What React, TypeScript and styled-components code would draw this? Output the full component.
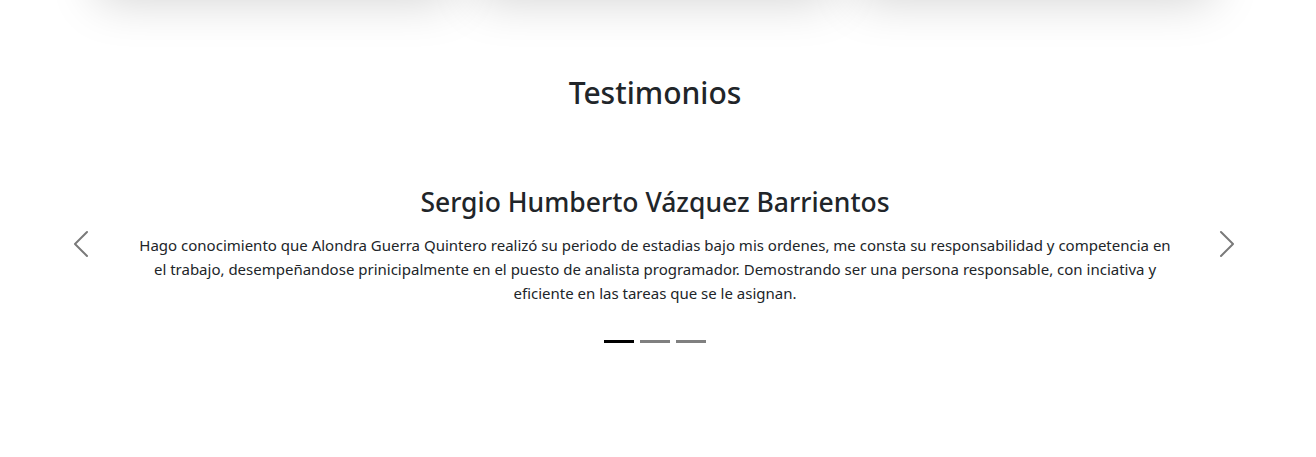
import React from "react";
import styled, { createGlobalStyle } from "styled-components";

const GlobalStyle = createGlobalStyle`
  html, body { margin: 0; padding: 0; background: #fff; }
  body {
    font-family: "Noto Sans", "Open Sans", sans-serif;
    color: #212529;
    overflow: hidden;
  }
`;

const Page = styled.main`
  width: 1310px;
  height: 457px;
  overflow: hidden;
`;

const CardsRow = styled.div`
  margin: -200px auto 0;
  width: 1116px;
  display: grid;
  grid-template-columns: repeat(3, 1fr);
  gap: 24px;
`;

const Card = styled.div`
  height: 185px;
  background: #fff;
  border-radius: 6px;
  box-shadow: 0 1rem 3rem rgba(0, 0, 0, 0.175);
`;

const Section = styled.section`
  padding-top: 90px;
  display: flex;
  flex-direction: column;
  align-items: center;
`;

const Title = styled.h2`
  margin: 0;
  font-size: 30px;
  font-weight: 500;
  line-height: 36px;
  color: #212529;
`;

const Carousel = styled.div`
  position: relative;
  width: 100%;
  margin-top: 75px;
`;

const Slide = styled.div`
  display: flex;
  flex-direction: column;
  align-items: center;
  text-align: center;
`;

const Name = styled.h3`
  margin: 0;
  font-size: 26.5px;
  font-weight: 500;
  line-height: 32px;
  color: #212529;
`;

const Quote = styled.p`
  margin: 15px 0 0;
  max-width: 1044px;
  font-size: 15px;
  line-height: 24px;
  color: #212529;
`;

const Indicators = styled.div`
  display: flex;
  justify-content: center;
  gap: 6px;
  margin-top: 35px;
`;

const Dot = styled.button<{ $active?: boolean }>`
  width: 30px;
  height: 3px;
  padding: 0;
  border: 0;
  background: ${(p) => (p.$active ? "#000" : "#808080")};
  cursor: pointer;
`;

const Control = styled.button<{ $side: "left" | "right" }>`
  position: absolute;
  top: 42px;
  ${(p) => (p.$side === "left" ? "left: 65px;" : "right: 67px;")}
  width: 32px;
  height: 32px;
  padding: 0;
  border: 0;
  background: transparent;
  color: #7a7a7a;
  cursor: pointer;
  display: flex;
  align-items: center;
  justify-content: center;
`;

const Chevron = ({ dir }: { dir: "prev" | "next" }) => (
  <svg width="32" height="32" viewBox="0 0 16 16" fill="currentColor">
    {dir === "prev" ? (
      <path d="M11.354 1.646a.5.5 0 0 1 0 .708L5.707 8l5.647 5.646a.5.5 0 0 1-.708.708l-6-6a.5.5 0 0 1 0-.708l6-6a.5.5 0 0 1 .708 0z" />
    ) : (
      <path d="M4.646 1.646a.5.5 0 0 1 .708 0l6 6a.5.5 0 0 1 0 .708l-6 6a.5.5 0 0 1-.708-.708L10.293 8 4.646 2.354a.5.5 0 0 1 0-.708z" />
    )}
  </svg>
);

export default function App() {
  return (
    <>
      <GlobalStyle />
      <Page>
        <CardsRow>
          <Card />
          <Card />
          <Card />
        </CardsRow>
        <Section>
          <Title>Testimonios</Title>
          <Carousel>
            <Slide>
              <Name>Sergio Humberto Vázquez Barrientos</Name>
              <Quote>
                Hago conocimiento que Alondra Guerra Quintero realizó su periodo de estadias bajo mis ordenes, me consta su
                responsabilidad y competencia en el trabajo, desempeñandose prinicipalmente en el puesto de analista
                programador. Demostrando ser una persona responsable, con inciativa y eficiente en las tareas que se le
                asignan.
              </Quote>
              <Indicators>
                <Dot $active aria-label="Slide 1" />
                <Dot aria-label="Slide 2" />
                <Dot aria-label="Slide 3" />
              </Indicators>
            </Slide>
            <Control $side="left" aria-label="Anterior">
              <Chevron dir="prev" />
            </Control>
            <Control $side="right" aria-label="Siguiente">
              <Chevron dir="next" />
            </Control>
          </Carousel>
        </Section>
      </Page>
    </>
  );
}
